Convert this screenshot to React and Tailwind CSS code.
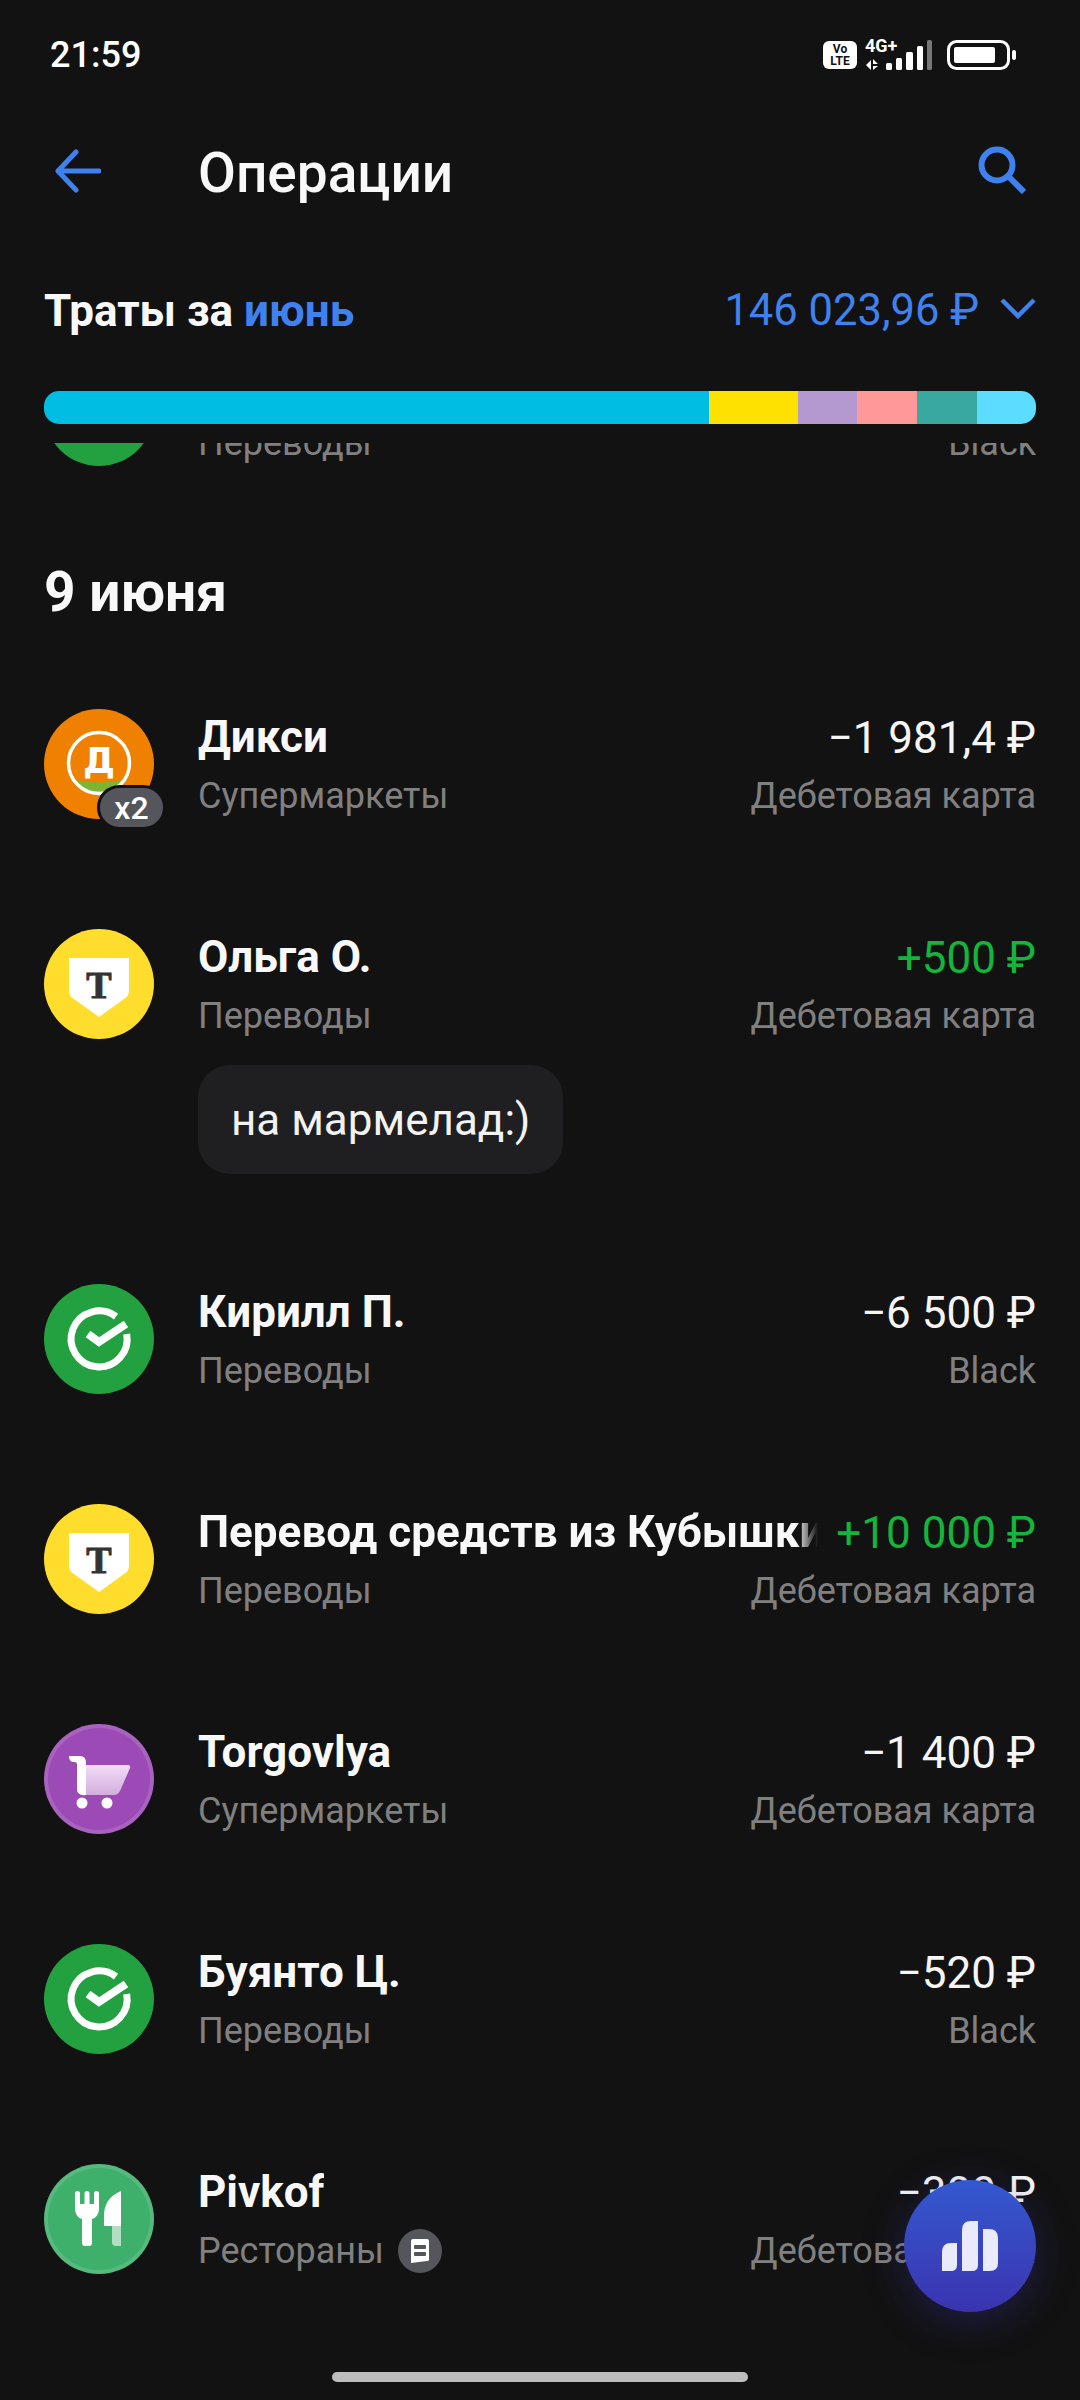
import React from 'react';

const segments = [
  { width: 'w-[665px]', color: 'bg-[#00bde3]' },
  { width: 'w-[89px]', color: 'bg-[#ffe100]' },
  { width: 'w-[59px]', color: 'bg-[#b399d0]' },
  { width: 'w-[60px]', color: 'bg-[#ff9999]' },
  { width: 'w-[60px]', color: 'bg-[#38a8a0]' },
  { width: 'w-[59px]', color: 'bg-[#5cdcff]' },
];

function StatusIcons() {
  return (
    <div className="flex items-center">
      <div className="w-[34px] h-[28px] rounded-[6px] bg-white flex flex-col items-center justify-center text-[#121212] text-[12px] leading-[12px] font-bold">
        <span>Vo</span>
        <span>LTE</span>
      </div>
      <div className="relative w-[70px] h-[32px] ml-[7px]">
        <span className="absolute left-[1px] top-[-3px] text-white text-[18px] leading-[20px] font-bold">4G+</span>
        <svg width="70" height="32" viewBox="0 0 70 32" className="absolute left-0 top-0">
          <path d="M2 26l5-5v10zM9 20l5 5h-5zM9 27h5l-5 4z" fill="#fff" />
          <rect x="22" y="24" width="6" height="7" rx="1.5" fill="#fff" />
          <rect x="32" y="19" width="6" height="12" rx="1.5" fill="#fff" />
          <rect x="42" y="13" width="7" height="18" rx="1.5" fill="#fff" />
          <rect x="53" y="7" width="6" height="24" rx="1.5" fill="#fff" />
          <rect x="63" y="1" width="5" height="30" rx="1.5" fill="#777" />
        </svg>
      </div>
      <svg width="70" height="30" viewBox="0 0 70 30" className="ml-[13px]">
        <rect x="1.5" y="1.5" width="60" height="27" rx="8" fill="none" stroke="#fff" strokeWidth="3" />
        <rect x="7" y="7" width="41" height="16" rx="2" fill="#fff" />
        <rect x="65" y="10" width="4" height="10" rx="2" fill="#fff" />
      </svg>
    </div>
  );
}

function DixyIcon() {
  return (
    <svg width="110" height="110" viewBox="0 0 110 110">
      <circle cx="55" cy="55" r="55" fill="#f08000" />
      <path d="M32 71q23 5 46 0q-6 12-23 13.5q-17-1.5-23-13.5z" fill="#7ab631" />
      <circle cx="55" cy="54" r="30.5" fill="none" stroke="#fff" strokeWidth="3.5" />
      <text x="55" y="64" textAnchor="middle" fontFamily="DejaVu Sans" fontWeight="700" fontSize="36" fill="#fff">Д</text>
    </svg>
  );
}

function TinkoffIcon() {
  return (
    <svg width="110" height="110" viewBox="0 0 110 110">
      <circle cx="55" cy="55" r="55" fill="#ffdd2d" />
      <path d="M25 29h60v33q0 5-5 8l-25 18l-25-18q-5-3-5-8z" fill="#fff" />
      <text x="55" y="69" textAnchor="middle" fontFamily="Liberation Serif" fontWeight="700" fontSize="38" fill="#333" stroke="#333" strokeWidth="1">Т</text>
    </svg>
  );
}

function SberIcon() {
  return (
    <svg width="110" height="110" viewBox="0 0 110 110">
      <circle cx="55" cy="55" r="55" fill="#23a03f" />
      <path d="M72 32.6A28 28 0 1 0 82.7 50" fill="none" stroke="#fff" strokeWidth="7" />
      <path d="M44 50l11 8l27-18" fill="none" stroke="#fff" strokeWidth="8" />
    </svg>
  );
}

function CartIcon() {
  return (
    <svg width="110" height="110" viewBox="0 0 110 110">
      <defs>
        <linearGradient id="cartFill" x1="0" y1="0" x2="0" y2="1">
          <stop offset="0" stopColor="#f3dcf8" />
          <stop offset="1" stopColor="#d2aedd" />
        </linearGradient>
      </defs>
      <circle cx="55" cy="55" r="55" fill="#a862c0" />
      <circle cx="55" cy="55" r="51" fill="#9c4ab5" />
      <path d="M42 41h42q3 0 2 3l-10 23q-2 4-6 4h-28z" fill="url(#cartFill)" />
      <path d="M25 32h11q6 0 6 7v32q-9 1-9-6v-25q0-2-3-2q-5 0-5-6z" fill="#fff" />
      <circle cx="38" cy="79" r="5.5" fill="#fff" />
      <circle cx="63" cy="79" r="5.5" fill="#fff" />
    </svg>
  );
}

function FoodIcon() {
  return (
    <svg width="110" height="110" viewBox="0 0 110 110">
      <circle cx="55" cy="55" r="55" fill="#56b97d" />
      <circle cx="55" cy="55" r="51" fill="#3fb06b" />
      <rect x="31" y="27" width="5" height="20" rx="2.5" fill="#fff" />
      <rect x="40.5" y="27" width="5" height="20" rx="2.5" fill="#fff" />
      <rect x="50" y="27" width="5" height="20" rx="2.5" fill="#fff" />
      <path d="M31 40h24v4q0 9-7 11v24q0 3-3 3h-4q-3 0-3-3V55q-7-2-7-11z" fill="#fff" />
      <path d="M77 27v35h-17v-10q0-18 17-25z" fill="#fff" />
      <path d="M68 62h9v20h-5q-4 0-4-4z" fill="#fff" fillOpacity="0.6" />
    </svg>
  );
}

// маленький значок чека рядом с категорией
function ReceiptBadge() {
  return (
    <span className="ml-[14px] w-[44px] h-[44px] rounded-full bg-[#54565b] flex items-center justify-center shrink-0">
      <svg width="22" height="24" viewBox="0 0 22 24">
        <path d="M2 2q0-2 2-2h14q2 0 2 2v19q0 1-2 1l-16 2z" fill="#fff" />
        <rect x="5" y="6" width="12" height="4" rx="1" fill="#54565b" />
        <rect x="5" y="13" width="12" height="4" rx="1" fill="#54565b" />
      </svg>
    </span>
  );
}

function Row({ icon, name, sub, amount, card, green, badge, receipt, comment, fade }) {
  return (
    <div className={comment ? 'flex h-[355px]' : 'flex h-[220px]'}>
      <div className="relative w-[110px] h-[110px] shrink-0">
        {icon}
        {badge && (
          <span className="absolute left-[53px] top-[76px] w-[69px] h-[45px] rounded-full bg-[#54565b] border-[3px] border-[#121212] flex items-center justify-center text-white text-[32px] font-medium leading-none">
            {badge}
          </span>
        )}
      </div>
      <div className="ml-[44px] flex-1 min-w-0 pt-[3px]">
        <div className="flex justify-between h-[50px] gap-[18px]">
          <span className={`min-w-0 overflow-hidden whitespace-nowrap text-[#f8f8f8] text-[44px] leading-[50px] font-bold ${fade ? '[mask-image:linear-gradient(to_left,transparent,black_22px)]' : ''}`}>
            {name}
          </span>
          <span className={`shrink-0 pt-[1px] text-[44px] leading-[50px] ${green ? 'text-[#14b53c]' : 'text-[#f5f5f5]'}`}>{amount}</span>
        </div>
        <div className="flex justify-between items-center h-[46px] mt-[11px] text-[#808080] text-[36px] leading-[46px]">
          <span className="flex items-center">
            {sub}
            {receipt && <ReceiptBadge />}
          </span>
          <span>{card}</span>
        </div>
        {comment && (
          <div className="mt-[26px] w-fit h-[109px] px-[33px] rounded-[32px] bg-[#1f1f21] flex items-center text-[#f2f2f2] text-[44px]">
            {comment}
          </div>
        )}
      </div>
    </div>
  );
}

export default function App() {
  return (
    <div className="relative w-[1080px] h-[2400px] overflow-hidden bg-[#121212] [font-family:Roboto,sans-serif]">
      {/* status bar */}
      <div className="h-[110px] pl-[50px] pr-[63px] flex items-center justify-between">
        <span className="text-white text-[36px] font-medium">21:59</span>
        <StatusIcons />
      </div>

      {/* toolbar */}
      <div className="h-[127px] pl-[55px] pr-[54px] flex items-center">
        <svg width="46" height="44" viewBox="0 0 46 44" className="mb-[6px]">
          <path d="M21 3L3 22l18 19M3 22h41" fill="none" stroke="#3f82ef" strokeWidth="5" strokeLinecap="round" strokeLinejoin="round" />
        </svg>
        <span className="ml-[97px] text-[#f8f8f8] text-[55px] font-medium">Операции</span>
        <svg width="48" height="48" viewBox="0 0 48 48" className="ml-auto mb-[7px]">
          <circle cx="19" cy="19" r="15.5" fill="none" stroke="#3f82ef" strokeWidth="6" />
          <path d="M30 30l16 16" fill="none" stroke="#3f82ef" strokeWidth="6" />
        </svg>
      </div>

      {/* итог за месяц */}
      <div className="mt-[37px] px-[44px]">
        <div className="flex items-center justify-between h-[74px]">
          <span className="text-[44px] font-bold text-[#f8f8f8]">
            Траты за <span className="text-[#3f82ef]">июнь</span>
          </span>
          <span className="flex items-center text-[#3f82ef] text-[43.5px]">
            146 023,96 ₽
            <svg width="36" height="22" viewBox="0 0 36 22" className="ml-[21px] mb-[6px]">
              <path d="M2 3l16 16L34 3" fill="none" stroke="#3f82ef" strokeWidth="4.5" />
            </svg>
          </span>
        </div>
        <div className="mt-[43px] h-[33px] flex rounded-[15px] overflow-hidden">
          {segments.map((s) => (
            <div key={s.color} className={`${s.width} ${s.color}`} />
          ))}
        </div>
      </div>

      {/* список операций, верхняя строка уходит под шапку */}
      <div className="mt-[19px] h-[1957px] overflow-hidden px-[44px]">
        <div className="-mt-[87px]">
          <div className="h-[206px] overflow-hidden">
            <Row icon={<SberIcon />} name="" sub="Переводы" card="Black" amount="" />
          </div>
          <div className="h-[147px] text-[#f8f8f8] text-[55px] leading-[60px] font-bold">9 июня</div>
          <Row icon={<DixyIcon />} badge="x2" name="Дикси" sub="Супермаркеты" amount="−1 981,4 ₽" card="Дебетовая карта" />
          <Row icon={<TinkoffIcon />} name="Ольга О." sub="Переводы" amount="+500 ₽" green card="Дебетовая карта" comment="на мармелад:)" />
          <Row icon={<SberIcon />} name="Кирилл П." sub="Переводы" amount="−6 500 ₽" card="Black" />
          <Row icon={<TinkoffIcon />} name="Перевод средств из Кубышки" fade sub="Переводы" amount="+10 000 ₽" green card="Дебетовая карта" />
          <Row icon={<CartIcon />} name="Torgovlya" sub="Супермаркеты" amount="−1 400 ₽" card="Дебетовая карта" />
          <Row icon={<SberIcon />} name="Буянто Ц." sub="Переводы" amount="−520 ₽" card="Black" />
          <Row icon={<FoodIcon />} name="Pivkof" sub="Рестораны" receipt amount="−300 ₽" card="Дебетовая карта" />
        </div>
      </div>

      {/* кнопка аналитики */}
      <button className="absolute left-[904px] top-[2180px] w-[132px] h-[132px] rounded-full bg-gradient-to-b from-[#3358cf] to-[#3a33b0] shadow-[0_8px_40px_rgba(58,51,176,0.35)] flex items-center justify-center">
        <svg width="56" height="50" viewBox="0 0 56 50">
          <path d="M0 50V31q0-9 9-9h6v22q0 6-6 6zM20 50V9q0-9 9-9h7v44q0 6-6 6zM41 50V8h6q9 0 9 9v25q0 8-8 8z" fill="#e9eafa" />
        </svg>
      </button>

      {/* home indicator */}
      <div className="absolute left-[332px] top-[2372px] w-[416px] h-[10px] rounded-full bg-[#bdbdbd]" />
    </div>
  );
}
